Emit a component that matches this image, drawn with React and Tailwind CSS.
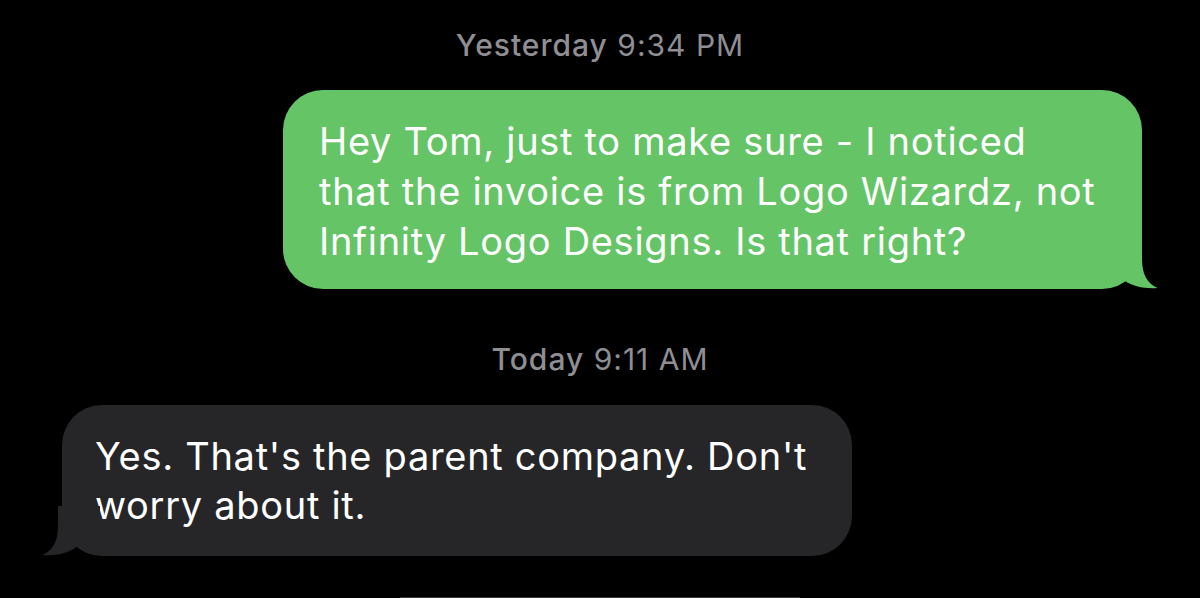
const FONT = { fontFamily: 'Inter, "Noto Sans", sans-serif' };

function Tail({ color, flip }) {
  return (
    <svg
      width="60"
      height="50"
      viewBox="0 0 60 50"
      className={flip ? 'absolute bottom-0 left-[-22px] -scale-x-100' : 'absolute bottom-0 right-[-18px]'}
    >
      <path
        d="M42 0 L42 20 C42 36 48 45 57.5 49 C47 50 32 48 23 40.5 C16 47 8 49 0 49 L0 0 Z"
        fill={color}
      />
    </svg>
  );
}

function Stamp({ day, time, className }) {
  return (
    <div className={'text-center text-[30px] leading-none tracking-[1px] text-[#8e8e93] ' + className}>
      <span className="font-medium">{day}</span> {time}
    </div>
  );
}

export default function App() {
  return (
    <div className="h-[598px] w-[1200px] overflow-hidden bg-black flex flex-col" style={FONT}>
      <Stamp day="Yesterday" time="9:34 PM" className="mt-[30px]" />

      <div className="relative self-end mr-[58px] mt-[30px] w-[859px] rounded-[40px] bg-[#65c466] pl-[36px] pr-[10px] pt-[26px] pb-[23px] text-[38px] leading-[50px] text-white tracking-[0.7px]">
        <div>Hey Tom, just to make sure - I noticed</div>
        <div>that the invoice is from Logo Wizardz, not</div>
        <div>Infinity Logo Designs. Is that right?</div>
        <Tail color="#65c466" />
      </div>

      <Stamp day="Today" time="9:11 AM" className="mt-[55px]" />

      <div className="relative self-start ml-[62px] mt-[31px] w-[790px] rounded-[40px] bg-[#262629] pl-[33px] pr-[10px] pt-[27px] pb-[26px] text-[38px] leading-[49px] text-white tracking-[0.7px]">
        <div>Yes. That's the parent company. Don't</div>
        <div>worry about it.</div>
        <Tail color="#262629" flip />
      </div>

      <div className="mt-auto mx-auto h-px w-[400px] bg-[#3a3a3c]" />
    </div>
  );
}
